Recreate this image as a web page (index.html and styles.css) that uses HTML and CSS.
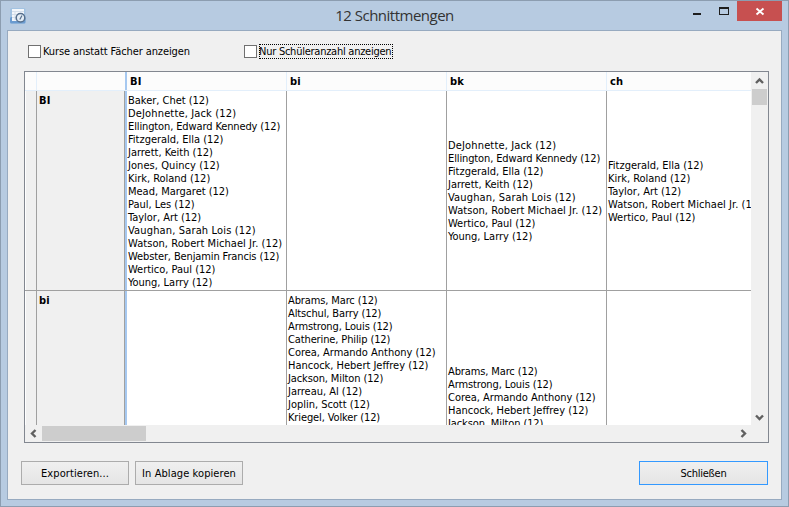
FILE: index.html
```html
<!DOCTYPE html>
<html lang="de">
<head>
<meta charset="utf-8">
<title>12 Schnittmengen</title>
<link rel="stylesheet" href="styles.css">
</head>
<body>
<div class="window">
  <header class="titlebar">
    <svg class="app-icon" width="16" height="16" viewBox="0 0 16 16">
      <rect x="0" y="0" width="15.5" height="15.5" rx="1.5" fill="#a3c3e2"/>
      <rect x="0" y="9" width="15.5" height="6.5" rx="1.5" fill="#6a9bd0"/>
      <rect x="2" y="1" width="12" height="12" fill="#f3f7fb"/>
      <path d="M2 3.5H14M2 6.5H7M2 9.5H6M5 4V12" stroke="#d5dfea" fill="none"/>
      <circle cx="10.5" cy="9.8" r="4.3" fill="#e4edf5" stroke="#566f8c" stroke-width="1.5"/>
      <path d="M9.8 11.5L12 7.5" stroke="#566f8c" stroke-width="1.2"/>
    </svg>
    <h1 class="title">12 Schnittmengen</h1>
    <div class="controls">
      <svg class="ctl" width="28" height="20" viewBox="0 0 28 20" shape-rendering="crispEdges"><rect x="12" y="12" width="8" height="2" fill="#1e1e1e"/></svg>
      <svg class="ctl" width="28" height="20" viewBox="0 0 28 20" shape-rendering="crispEdges"><path d="M10 6H20V14H10ZM11 8V13H19V8Z" fill="#1e1e1e" fill-rule="evenodd"/></svg>
      <svg class="ctl close" width="45" height="20" viewBox="0 0 45 20"><path d="M19.5 7.5L26.5 13.5M26.5 7.5L19.5 13.5" stroke="#fff" stroke-width="1.9"/></svg>
    </div>
  </header>
  <main class="client">
    <div class="options">
      <label class="option"><span class="box"></span><span class="text t-kurse">Kurse anstatt Fächer anzeigen</span></label>
      <label class="option focused"><span class="box"></span><span class="text t-nur">Nur Schüleranzahl anzeigen</span></label>
    </div>
    <section class="grid-view">
      <div class="viewport">
        <div class="row head">
          <div class="handle"></div><div class="label"></div>
          <div class="cell">BI</div><div class="cell">bi</div><div class="cell">bk</div><div class="cell last">ch</div>
        </div>
        <div class="row first">
          <div class="handle"></div><div class="label">BI</div>
          <div class="cell"><ul><li>Baker, Chet (12)</li><li class="wider">DeJohnette, Jack (12)</li><li class="tight">Ellington, Edward Kennedy (12)</li><li>Fitzgerald, Ella (12)</li><li>Jarrett, Keith (12)</li><li class="loose">Jones, Quincy (12)</li><li>Kirk, Roland (12)</li><li>Mead, Margaret (12)</li><li>Paul, Les (12)</li><li>Taylor, Art (12)</li><li class="wider">Vaughan, Sarah Lois (12)</li><li class="loose">Watson, Robert Michael Jr. (12)</li><li class="tight">Webster, Benjamin Francis (12)</li><li>Wertico, Paul (12)</li><li>Young, Larry (12)</li></ul></div>
          <div class="cell"></div>
          <div class="cell"><ul><li class="wider">DeJohnette, Jack (12)</li><li class="tight">Ellington, Edward Kennedy (12)</li><li>Fitzgerald, Ella (12)</li><li>Jarrett, Keith (12)</li><li class="wider">Vaughan, Sarah Lois (12)</li><li class="loose">Watson, Robert Michael Jr. (12)</li><li>Wertico, Paul (12)</li><li>Young, Larry (12)</li></ul></div>
          <div class="cell last"><ul><li>Fitzgerald, Ella (12)</li><li>Kirk, Roland (12)</li><li>Taylor, Art (12)</li><li class="loose">Watson, Robert Michael Jr. (12)</li><li>Wertico, Paul (12)</li></ul></div>
        </div>
        <div class="row second">
          <div class="handle"></div><div class="label">bi</div>
          <div class="cell"></div>
          <div class="cell"><ul><li class="tight">Abrams, Marc (12)</li><li class="tight">Altschul, Barry (12)</li><li class="tight">Armstrong, Louis (12)</li><li class="tight">Catherine, Philip (12)</li><li>Corea, Armando Anthony (12)</li><li>Hancock, Hebert Jeffrey (12)</li><li class="tight">Jackson, Milton (12)</li><li>Jarreau, Al (12)</li><li>Joplin, Scott (12)</li><li class="tight">Kriegel, Volker (12)</li></ul></div>
          <div class="cell lower"><ul><li class="tight">Abrams, Marc (12)</li><li class="tight">Armstrong, Louis (12)</li><li>Corea, Armando Anthony (12)</li><li>Hancock, Hebert Jeffrey (12)</li><li class="tight">Jackson, Milton (12)</li></ul></div>
          <div class="cell last"></div>
        </div>
      </div>
      <div class="vscroll">
        <svg width="15" height="17" viewBox="0 0 15 17"><path d="M4 11L7.5 7.5L11 11" fill="none" stroke="#606060" stroke-width="2.4"/></svg>
        <div class="thumb"></div>
        <svg width="15" height="17" viewBox="0 0 15 17"><path d="M4 6.5L7.5 10L11 6.5" fill="none" stroke="#606060" stroke-width="2.4"/></svg>
      </div>
      <div class="hscroll">
        <svg width="17" height="15" viewBox="0 0 17 15"><path d="M10.5 4L7 7.5L10.5 11" fill="none" stroke="#606060" stroke-width="2.4"/></svg>
        <div class="thumb"></div>
        <svg width="17" height="15" viewBox="0 0 17 15"><path d="M6.5 4L10 7.5L6.5 11" fill="none" stroke="#606060" stroke-width="2.4"/></svg>
      </div>
    </section>
    <footer class="buttons">
      <button class="btn wide">Exportieren...</button>
      <button class="btn wide">In Ablage kopieren</button>
      <button class="btn primary">Schließen</button>
    </footer>
  </main>
</div>
</body>
</html>
```
FILE: styles.css
```css
* { box-sizing: border-box; }
body { margin: 0; font: 11px/13px "DejaVu Sans Condensed", "DejaVu Sans", sans-serif; font-stretch: condensed; letter-spacing: -0.25px; color: #000; }
ul { list-style: none; margin: 0; padding: 0; }
li { letter-spacing: -0.02px; }
.tight { letter-spacing: -0.12px; }
.loose { letter-spacing: 0.06px; }
.wider { letter-spacing: 0.15px; }
svg { display: block; }
.window { width: 789px; height: 507px; background: #b7cbe1; border: 1px solid #8c9db0; padding: 0 6px; display: flex; flex-direction: column; }
.titlebar { height: 29px; display: grid; grid-template-columns: 115px 1fr 115px; flex: none; }
.app-icon { margin: 7px 0 0 3px; }
.title { margin: 0; font: 15px/29px "Open Sans", sans-serif; letter-spacing: -0.5px; color: #333; text-align: center; }
.controls { display: flex; justify-content: flex-end; }
.close { background: #c75050; }
.client { width: 775px; height: 470px; background: #f0f0f0; border: 1px solid #97aac0; padding: 13px 13px 0 13px; }
.options { display: flex; height: 27px; margin-left: 7px; }
.option { display: flex; width: 216px; height: 15px; }
.box { width: 13px; height: 13px; border: 1px solid #707070; background: #fff; margin: 1px 2px 0 0; }
.text { line-height: 15px; white-space: nowrap; }
.t-kurse { letter-spacing: -0.1px; }
.focused .text { outline: 1px dotted #000; outline-offset: -1px; height: 15px; width: 134px; }
.grid-view { width: 745px; height: 372px; margin-left: 3px; border: 1px solid #828790; background: #f0f0f0; display: grid; grid-template: 354px 16px / 727px 16px; }
.viewport { background: #fff; overflow: hidden; height: 353px; width: 726px; }
.row { display: grid; grid-template-columns: 12px 90px 160px 160px 160px 144px; }
.handle { background: #f0f0f0; border-right: 1px solid #a0a0a0; border-left: 1px solid #fff; }
.label { background: #f0f0f0; border-right: 2px solid #a6c8f0; box-shadow: inset -1px 0 #a0a0a0; padding: 3px 0 0 2px; font-weight: bold; letter-spacing: 0.2px; }
.cell { border-right: 1px solid #a0a0a0; padding: 0 0 0 1px; white-space: nowrap; overflow: hidden; }
.last { border-right: 0; }
.head { height: 19px; background: #fcfcfc; border-bottom: 1px solid #e3effb; }
.head .handle, .head .label { background: #fcfcfc; border-left: 0; box-shadow: none; }
.head .handle { border-right-color: #e3effb; }
.head .cell { border-color: #e3effb; font-weight: bold; letter-spacing: 0.2px; line-height: 19px; padding-left: 3px; }
.first { height: 200px; border-bottom: 1px solid #a0a0a0; }
.first .cell { display: grid; align-content: center; padding-top: 1px; }
.second { height: 134px; }
.second .cell { padding-top: 3px; }
.second .lower { padding-top: 74px; }
.vscroll { display: flex; flex-direction: column; height: 354px; }
.vscroll .thumb { width: 15px; height: 16px; background: #cdcdcd; margin-bottom: auto; }
.hscroll { display: flex; width: 727px; }
.hscroll .thumb { width: 104px; height: 15px; background: #cdcdcd; margin-right: auto; }
.buttons { display: flex; gap: 6px; margin-top: 18px; }
.btn { width: 108px; height: 24px; padding: 0; font: inherit; letter-spacing: inherit; color: #000; border: 1px solid #acacac; background: linear-gradient(#f0f0f0, #e5e5e5); }
.wide { letter-spacing: 0.08px; }
.primary { width: 129px; margin-left: auto; border-color: #3399ff; }
```
